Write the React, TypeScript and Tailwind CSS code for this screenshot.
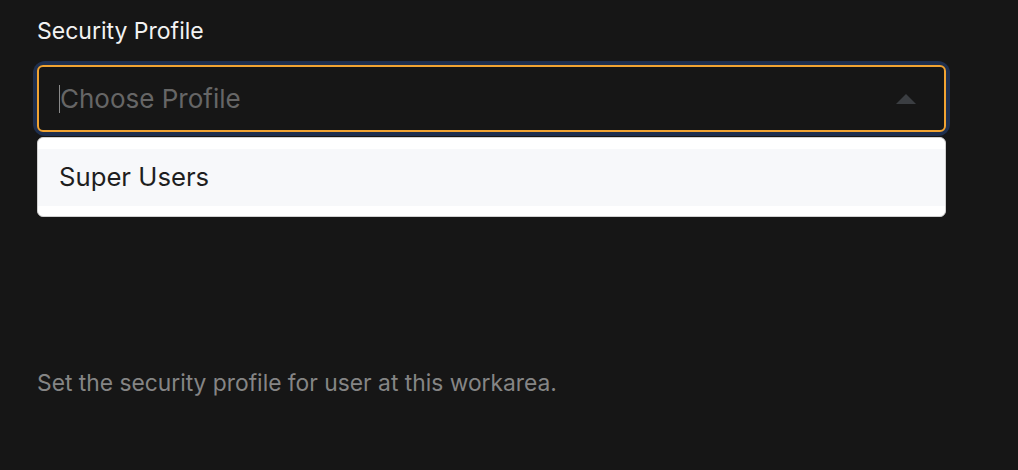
import React from "react";

export default function App() {
  return (
    <div
      className="w-[1018px] h-[470px] bg-[#161616] overflow-hidden"
      style={{ fontFamily: "Inter, Roboto, sans-serif" }}
    >
      <div className="pl-[37px] pt-[16px] w-[946px]">
        <label className="block text-[23px] leading-[30px] text-[#f2f2f2]">Security Profile</label>
        <div className="mt-[19px] rounded-[8px] ring-4 ring-[#1e2f4f]">
          <div className="h-[67px] rounded-[6px] border-2 border-[#f0a332] bg-[#161616] flex items-center pl-[20px] pr-[28px]">
            <span className="w-px h-[28px] bg-[#8a8a8a]" />
            <span className="text-[26px] text-[#666666]">Choose Profile</span>
            <span className="ml-auto w-0 h-0 border-l-[10px] border-r-[10px] border-b-[10px] border-l-transparent border-r-transparent border-b-[#3b3e42]" />
          </div>
        </div>
        <div className="mt-[5px] h-[80px] rounded-[6px] bg-white border border-[#d0d0d0] py-[11px]">
          <div className="h-[57px] bg-[#f7f8fa] flex items-center pl-[21px] text-[25.7px] text-[#1e1e1e]">
            Super Users
          </div>
        </div>
        <p className="mt-[149px] text-[22.8px] text-[#858585]">Set the security profile for user at this workarea.</p>
      </div>
    </div>
  );
}
